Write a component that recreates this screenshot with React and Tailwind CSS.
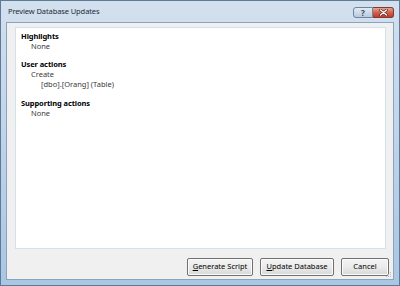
import React from "react";

const font = { fontFamily: '"Noto Sans", "Open Sans", sans-serif' };

const Section = ({ title, children, className = "" }) => (
    <div className={className}>
        <div className="font-bold text-black tracking-[-0.1px]">{title}</div>
        <div className="pl-[10px] text-[#3a3a3a]">{children}</div>
    </div>
);

const DlgButton = ({ width, children }) => (
    <button
        className={`${width} h-[18px] rounded-[2px] border border-[#707070] bg-gradient-to-b from-[#f4f4f4] via-[#ebebeb] to-[#d8d8d8] text-[7.5px] text-black leading-none shadow-[inset_0_0_0_1px_#fcfcfc]`}
    >
        {children}
    </button>
);

const App = () => {
    return (
        <div
            className="w-[400px] h-[286px] flex flex-col bg-gradient-to-b from-[#d3e0ee] via-[#bfd3e8] to-[#a9c6e3] border border-[#5d7a98]"
            style={font}
        >
            {/* title bar */}
            <div className="h-[21px] flex items-center pl-[7px] pr-[5px] shrink-0">
                <span className="text-[7.5px] text-[#1e2a38] tracking-[-0.1px]">
                    Preview Database Updates
                </span>
                <div className="flex-1" />
                <div className="flex self-start mt-[6px]">
                    <div className="w-[20px] h-[11px] flex items-center justify-center rounded-l-[3px] border border-[#6f859d] bg-gradient-to-b from-[#e2ebf4] to-[#b8cade] text-[8px] font-bold leading-none text-[#3a4b60]">
                        ?
                    </div>
                    <div className="w-[21px] h-[11px] flex items-center justify-center rounded-r-[3px] border border-l-0 border-[#7d3b32] bg-gradient-to-b from-[#e6a394] via-[#d0614c] to-[#c0392b]">
                        <svg width="9" height="7" viewBox="0 0 9 7">
                            <path
                                d="M1.5 1 L7.5 6 M7.5 1 L1.5 6"
                                stroke="#5a1d14"
                                strokeWidth="2.6"
                                strokeLinecap="round"
                            />
                            <path
                                d="M1.5 1 L7.5 6 M7.5 1 L1.5 6"
                                stroke="#ffffff"
                                strokeWidth="1.4"
                                strokeLinecap="round"
                            />
                        </svg>
                    </div>
                </div>
            </div>

            {/* client area */}
            <div className="flex-1 mx-[5px] mb-[5px] flex flex-col bg-[#f0f0f0] border border-[#8aa3bf]">
                <div className="mt-[4px] ml-[8px] mr-[7px] h-[222px] bg-white border border-[#d4e0ec] pl-[5px] pt-[3px] text-[7.5px] leading-[10px]">
                    <Section title="Highlights">
                        <div>None</div>
                    </Section>
                    <Section title="User actions" className="mt-[8px]">
                        <div>Create</div>
                        <div className="pl-[10px]">[dbo].[Orang] (Table)</div>
                    </Section>
                    <Section title="Supporting actions" className="mt-[9px]">
                        <div>None</div>
                    </Section>
                </div>

                <div className="flex-1 flex items-start justify-end pt-[9px] pr-[4px] relative">
                    <div className="flex gap-[7px]">
                        <DlgButton width="w-[66px]">
                            <span className="underline">G</span>enerate Script
                        </DlgButton>
                        <DlgButton width="w-[74px]">
                            <span className="underline">U</span>pdate Database
                        </DlgButton>
                        <DlgButton width="w-[48px]">Cancel</DlgButton>
                    </div>
                    <svg
                        className="absolute right-[1px] bottom-[1px]"
                        width="6"
                        height="6"
                        viewBox="0 0 6 6"
                    >
                        <rect x="4" y="0" width="1" height="1" fill="#bcbcbc" />
                        <rect x="2" y="2" width="1" height="1" fill="#bcbcbc" />
                        <rect x="4" y="2" width="1" height="1" fill="#bcbcbc" />
                        <rect x="0" y="4" width="1" height="1" fill="#bcbcbc" />
                        <rect x="2" y="4" width="1" height="1" fill="#bcbcbc" />
                        <rect x="4" y="4" width="1" height="1" fill="#bcbcbc" />
                    </svg>
                </div>
            </div>
        </div>
    );
};

export default App;
